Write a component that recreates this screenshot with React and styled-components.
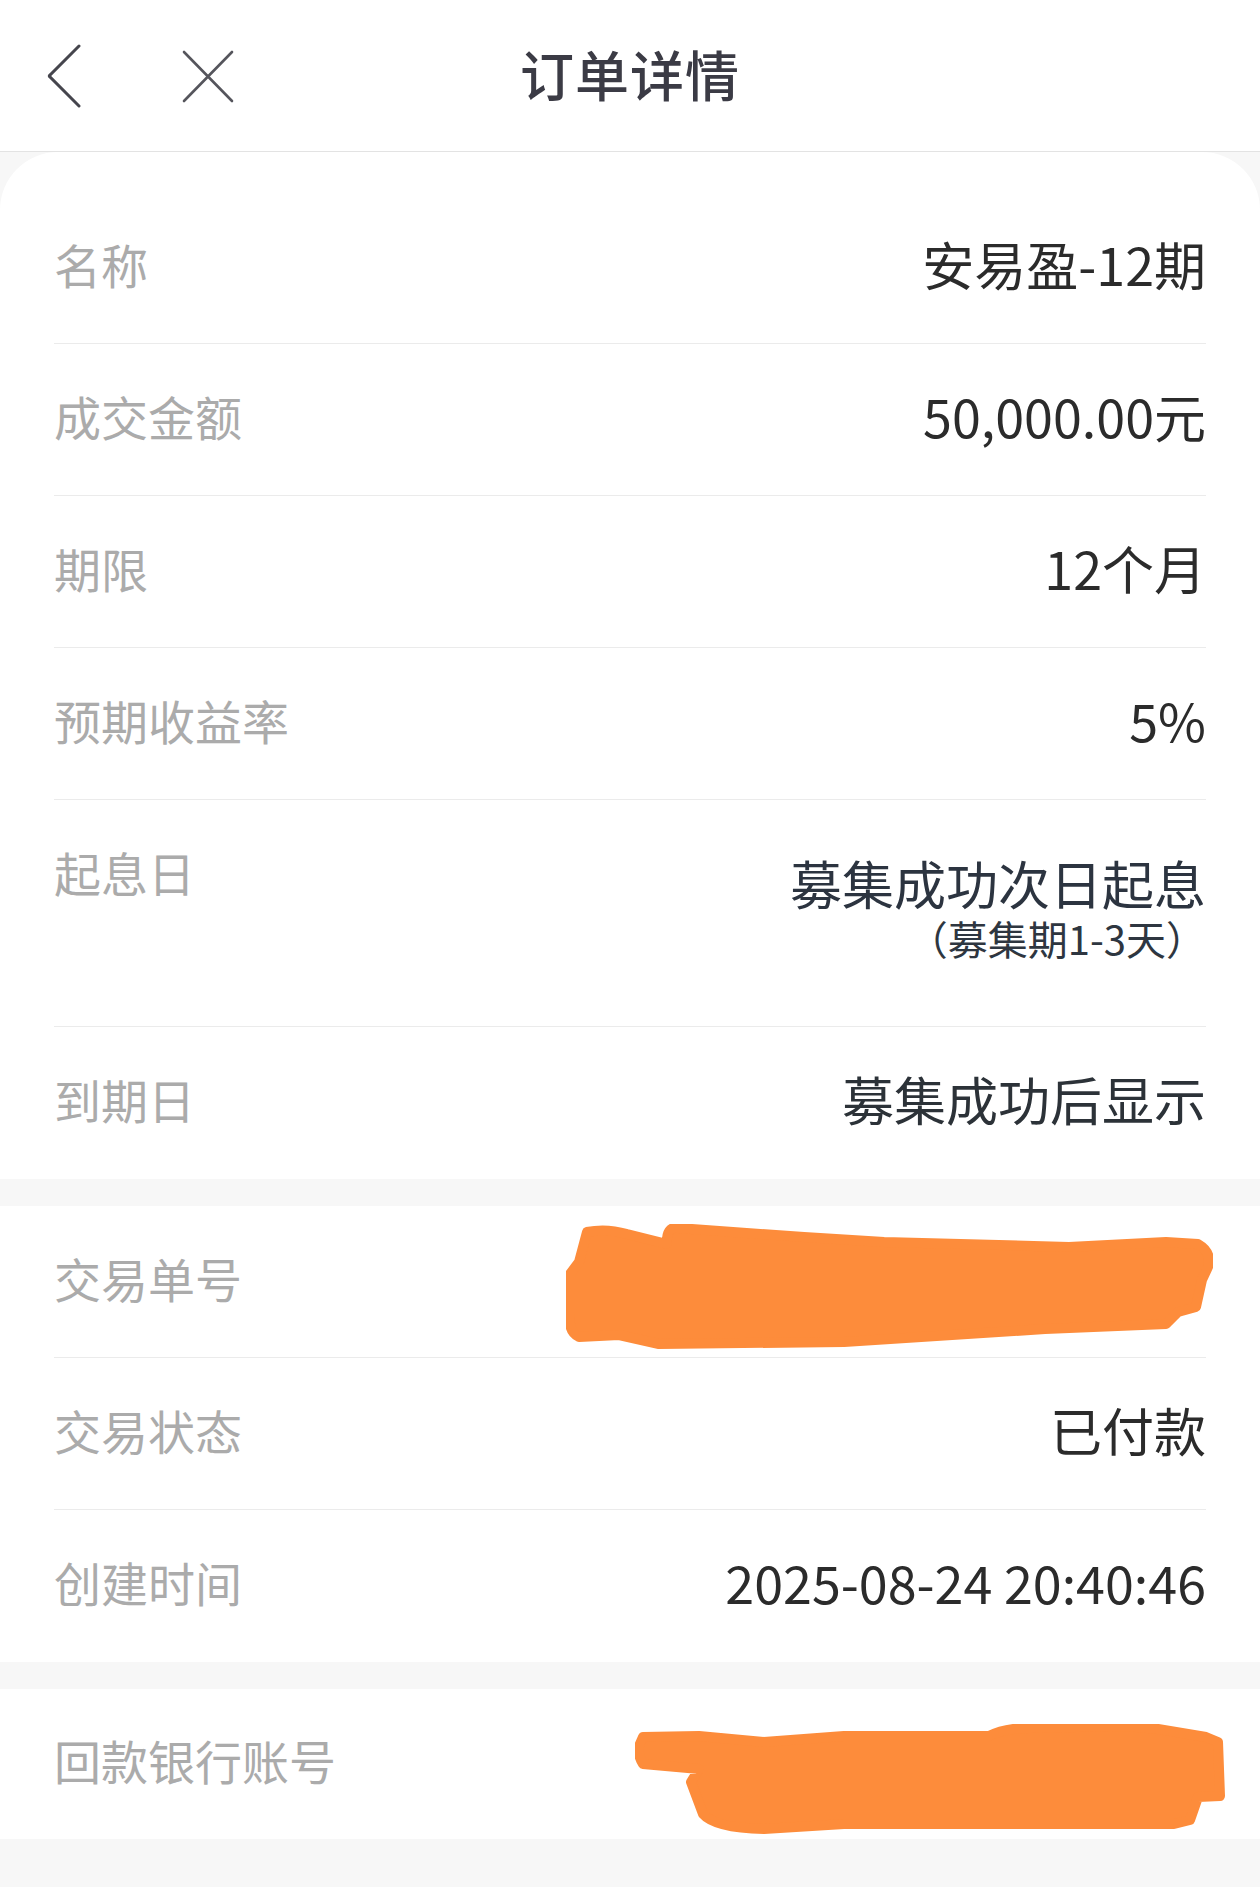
import styled, { createGlobalStyle } from "styled-components";

const Global = createGlobalStyle`
    body {
        margin: 0;
        background: #f7f7f7;
        font-family: "Noto Sans CJK SC", "Noto Sans", sans-serif;
    }
`;

const Page = styled.div`
    width: 1260px;
    min-height: 1887px;
    background: #f7f7f7;
`;

const Header = styled.header`
    height: 152px;
    box-sizing: border-box;
    border-bottom: 1px solid #e3e3e3;
    background: #fff;
    display: flex;
    align-items: center;
    justify-content: center;
    position: relative;
`;

const NavIcons = styled.div`
    position: absolute;
    left: 46px;
    top: 44px;
    display: flex;
    align-items: center;
    gap: 100px;
`;

const Title = styled.h1`
    margin: 0 0 4px;
    font-size: 54px;
    font-weight: 500;
    color: #3b3b45;
    letter-spacing: 1px;
`;

const Section = styled.section`
    background: #fff;
    padding: ${p => p.$top || 0}px 54px 0;
    border-radius: ${p => (p.$rounded ? "58px 58px 0 0" : "0")};
    margin-bottom: 27px;
`;

const Row = styled.div`
    height: ${p => p.$h || 152}px;
    box-sizing: border-box;
    display: flex;
    justify-content: space-between;
    align-items: ${p => (p.$top ? "flex-start" : "center")};
    padding: ${p => (p.$top ? "42px 0 0" : "0 0 8px")};
    border-bottom: ${p => (p.$last ? "none" : "1px solid #ebebeb")};
`;

const Label = styled.span`
    font-size: 47px;
    line-height: 60px;
    color: #ababab;
`;

const Value = styled.div`
    display: flex;
    flex-direction: column;
    align-items: flex-end;
    margin-top: ${p => p.$offset || 0}px;
`;

const Main = styled.span`
    font-size: 52px;
    line-height: 62px;
    color: ${p => p.$tone || "#2b2b2b"};
`;

const Sub = styled.span`
    font-size: 40px;
    line-height: 48px;
    color: #2e3640;
`;

const Scribble = styled.svg`
    flex-shrink: 0;
    margin-right: ${p => p.$mr}px;
    margin-top: ${p => p.$mt || 0}px;
`;

const BackIcon = () => (
    <svg width="36" height="64" viewBox="0 0 36 64">
        <path d="M33 2 L4 31 Q2.5 32 4 33 L33 62" fill="none" stroke="#45454d" strokeWidth="3" strokeLinecap="round" />
    </svg>
);

const CloseIcon = () => (
    <svg width="52" height="54" viewBox="0 0 52 54">
        <path d="M2 3 L50 52 M50 3 L2 52" fill="none" stroke="#55555c" strokeWidth="2.6" strokeLinecap="round" />
    </svg>
);

const blobA = "M21 8 Q40 4 61 10 L101 20 Q100 2 112 4 L238 13 L318 18 L503 23 L600 18 L632 20 Q646 28 642 43 L636 56 L630 83 L612 88 L600 100 L479 105 L278 118 L93 120 L53 111 L13 113 Q2 108 4 90 L4 50 L13 38 L17 23 Z";
const blobB = "M8 13 L64 12 L129 18 L209 12 L354 12 Q370 4 394 4 L490 2 L523 5 L571 13 L583 18 L585 72 L563 73 L555 96 L539 100 L410 100 L209 100 L129 105 Q80 104 68 90 L56 58 L64 45 L8 40 Q2 30 4 22 Z";

const rows1 = [
    ["名称", "安易盈-12期"],
    ["成交金额", "50,000.00元"],
    ["期限", "12个月"],
    ["预期收益率", "5%"],
];

export default function App() {
    return (
        <Page>
            <Global />
            <Header>
                <NavIcons>
                    <BackIcon />
                    <CloseIcon />
                </NavIcons>
                <Title>订单详情</Title>
            </Header>

            <Section $rounded $top={40}>
                {rows1.map(([k, v]) => (
                    <Row key={k}>
                        <Label>{k}</Label>
                        <Main>{v}</Main>
                    </Row>
                ))}
                <Row $h={227} $top>
                    <Label>起息日</Label>
                    <Value $offset={10}>
                        <Main $tone="#2c3440">募集成功次日起息</Main>
                        <Sub>（募集期1-3天）</Sub>
                    </Value>
                </Row>
                <Row $last>
                    <Label>到期日</Label>
                    <Main $tone="#2c3238">募集成功后显示</Main>
                </Row>
            </Section>

            <Section>
                <Row>
                    <Label>交易单号</Label>
                    <Scribble width="647" height="125" viewBox="0 0 647 125" $mr={-7} $mt={18}>
                        <path d={blobA} fill="#fd8c3b" stroke="#fd8c3b" strokeWidth="10" strokeLinejoin="round" />
                    </Scribble>
                </Row>
                <Row>
                    <Label>交易状态</Label>
                    <Main>已付款</Main>
                </Row>
                <Row $last>
                    <Label>创建时间</Label>
                    <Main>2025-08-24 20:40:46</Main>
                </Row>
            </Section>

            <Section>
                <Row $h={150} $last>
                    <Label>回款银行账号</Label>
                    <Scribble width="590" height="110" viewBox="0 0 590 110" $mr={-19} $mt={38}>
                        <path d={blobB} fill="#fd8c3b" stroke="#fd8c3b" strokeWidth="10" strokeLinejoin="round" />
                    </Scribble>
                </Row>
            </Section>
        </Page>
    );
}
